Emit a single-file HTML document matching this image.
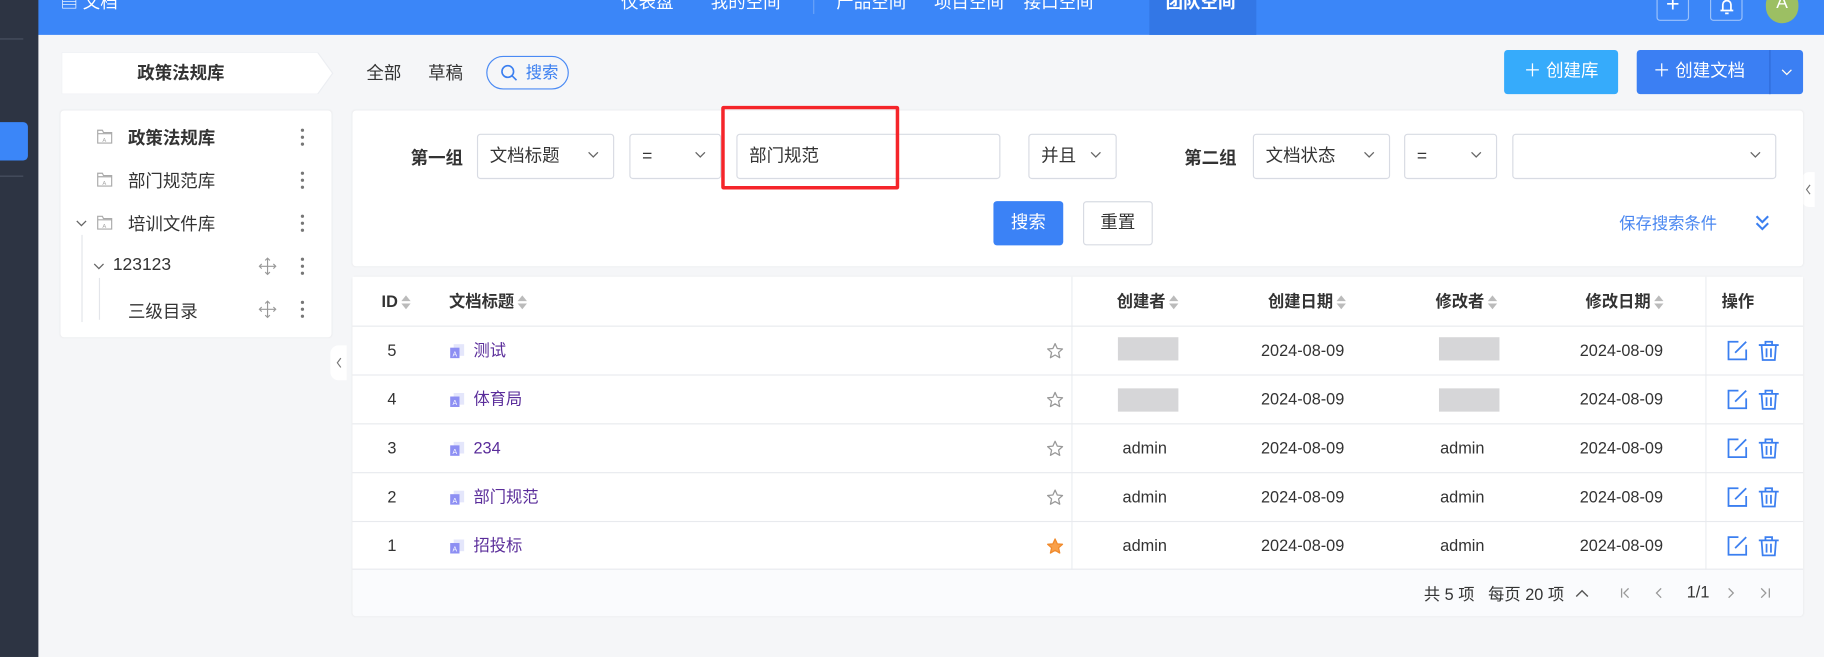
<!DOCTYPE html>
<html><head><meta charset="utf-8"><style>
*{box-sizing:border-box;margin:0;padding:0}
html,body{width:1824px;height:657px;overflow:hidden;background:#f5f6f8}
body{font-family:"Liberation Sans","Noto Sans CJK SC",sans-serif;color:#333;font-size:14px}
#w{position:absolute;left:0;top:0;width:1568px;height:565px;transform:scale(1.16327,1.1628);transform-origin:0 0;background:#f5f6f8}
.a{position:absolute}
.hd{left:0;top:0;width:1568px;height:30px;background:#3b86f8}
.nav{top:-9px;color:#fff;font-size:15px}
.side{left:0;top:0;width:33px;height:565px;background:#2d3443}
.pan{background:#fff;border-radius:3px;box-shadow:0 0 2px rgba(0,0,0,.06)}
.sel{background:#fff;border:1px solid #d8dbe3;border-radius:3px;height:39px;top:115px;font-size:15px;line-height:37px;padding-left:10px}
.sel svg{position:absolute;right:12px;top:14px}
.row{left:0;width:1247px;height:42px;border-top:1px solid #e8eaee}
.cell{position:absolute;top:0;line-height:41px;font-size:14px}
.lk{color:#5a2d9a}
.tree{font-size:15px}
.dots{position:absolute;left:206px}
.sort{display:inline-block;vertical-align:middle;margin-left:3px;width:8px}
.sort:before{content:"";display:block;border:4px solid transparent;border-bottom:5px solid #bbb;border-top:0;margin-bottom:2px}
.sort:after{content:"";display:block;border:4px solid transparent;border-top:5px solid #bbb;border-bottom:0}
.ic{position:absolute}
</style></head><body><div id="w">
<svg width="0" height="0" style="position:absolute"><defs>
<symbol id="chev" viewBox="0 0 10 6"><path d="M1 1l4 4 4-4" fill="none" stroke="#666" stroke-width="1.1"/></symbol>
<symbol id="dot3" viewBox="0 0 4 16"><circle cx="2" cy="2" r="1.4" fill="#777"/><circle cx="2" cy="8" r="1.4" fill="#777"/><circle cx="2" cy="14" r="1.4" fill="#777"/></symbol>
<symbol id="fold" viewBox="0 0 14 13"><path d="M1 1h4l1 2h7v9H1z" fill="none" stroke="#aaa"/><path d="M1 4h12" stroke="#aaa"/><text x="5" y="11" font-size="5" fill="#aaa" font-family="Liberation Sans">A</text></symbol>
<symbol id="move" viewBox="0 0 16 16"><path d="M8 1v14M1 8h14" stroke="#999" stroke-width="1"/><path d="M6 3l2-2 2 2M6 13l2 2 2-2M3 6l-2 2 2 2M13 6l2 2-2 2" fill="none" stroke="#999"/></symbol>
<symbol id="star" viewBox="0 0 16 16"><path d="M8 1.5l1.9 4.2 4.5.4-3.4 3 1 4.5L8 11.3l-4 2.3 1-4.5-3.4-3 4.5-.4z" fill="none" stroke="#999" stroke-width="1.1" stroke-linejoin="round"/></symbol>
<symbol id="starf" viewBox="0 0 16 16"><path d="M8 1.5l1.9 4.2 4.5.4-3.4 3 1 4.5L8 11.3l-4 2.3 1-4.5-3.4-3 4.5-.4z" fill="#f9a04a" stroke="#f08a2c" stroke-width="1.1" stroke-linejoin="round"/></symbol>
<symbol id="doc" viewBox="0 0 14 14"><rect x="4" y="1" width="9" height="10" fill="#e4e6fb"/><rect x="1" y="4" width="8" height="9" fill="#8d8ff3"/><text x="3" y="11.5" font-size="6" fill="#fff" font-family="Liberation Sans">A</text></symbol>
<symbol id="edit" viewBox="0 0 20 20"><path d="M11 2H2v16h16V9" fill="none" stroke="#3b7ff0" stroke-width="1.6"/><path d="M8 12L18 2" stroke="#3b7ff0" stroke-width="1.6"/></symbol>
<symbol id="trash" viewBox="0 0 20 20"><path d="M1 5h18M7 5V2h6v3M3.5 5l1 13.5h11L16.5 5M8 8v8M12 8v8" fill="none" stroke="#3b7ff0" stroke-width="1.6"/></symbol>
</defs></svg>
<div class="a hd"></div>
<div class="a side"></div>
<div class="a" style="left:0;top:33px;width:20px;height:1px;background:#4a5262"></div>
<div class="a" style="left:0;top:105px;width:24px;height:33px;background:#3b86f8;border-radius:0 4px 4px 0"></div>
<div class="a" style="left:0;top:151px;width:20px;height:1px;background:#4a5262"></div>
<div class="a" style="left:52px;top:-9px;color:#fff;font-size:15px">▤ 文档</div>
<div class="a nav" style="left:534px">仪表盘</div>
<div class="a nav" style="left:611px">我的空间</div>
<div class="a" style="left:699px;top:0;width:1px;height:12px;background:#6aa3f8"></div>
<div class="a nav" style="left:719px">产品空间</div>
<div class="a nav" style="left:803px">项目空间</div>
<div class="a nav" style="left:880px">接口空间</div>
<div class="a" style="left:988px;top:0;width:92px;height:30px;background:#3377e6"></div>
<div class="a nav" style="left:1002px;font-weight:bold">团队空间</div>
<div class="a" style="left:1424px;top:-6px;width:28px;height:24px;border:1px solid #9cc2fb;border-radius:3px;color:#fff;text-align:center;line-height:18px;font-size:20px">+</div>
<div class="a" style="left:1470px;top:-6px;width:28px;height:24px;border:1px solid #9cc2fb;border-radius:3px"><svg class="ic" style="left:7px;top:4px" width="13" height="14" viewBox="0 0 13 14"><path d="M3 10V5a3.5 3.5 0 017 0v5M1 10h11M5 12.5h3" fill="none" stroke="#fff" stroke-width="1.5"/></svg></div>
<div class="a" style="left:1518px;top:-10px;width:28px;height:30px;border-radius:14px;background:#9cbf63;color:#fff;text-align:center;line-height:26px;font-size:15px">A</div>

<svg class="a" style="left:53px;top:45px" width="234" height="36"><polygon points="0,0 220,0 233,18 220,36 0,36" fill="#fff" stroke="#eceef2"/></svg>
<div class="a" style="left:53px;top:52px;width:205px;text-align:center;font-weight:bold;font-size:15px">政策法规库</div>
<div class="a" style="left:315px;top:52px;font-size:15px">全部</div>
<div class="a" style="left:368px;top:52px;font-size:15px">草稿</div>
<div class="a" style="left:418px;top:48px;width:71px;height:29px;border:1px solid #4a8af4;border-radius:15px;color:#3b7ff0;font-size:14px;line-height:27px;padding-left:33px">搜索<svg class="ic" style="left:11px;top:6px" width="15" height="15" viewBox="0 0 15 15"><circle cx="6.5" cy="6.5" r="5" fill="none" stroke="#3b7ff0" stroke-width="1.4"/><path d="M10 10l4 4" stroke="#3b7ff0" stroke-width="1.4"/></svg></div>
<div class="a" style="left:1293px;top:43px;width:98px;height:38px;background:#36abfb;border-radius:3px;color:#fff;font-size:15px;line-height:38px;text-align:center">＋ 创建库</div>
<div class="a" style="left:1407px;top:43px;width:143px;height:38px;background:#3b7ff3;border-radius:3px;color:#fff;font-size:15px;line-height:38px;padding-left:14px">＋ 创建文档<span style="position:absolute;left:114px;top:0;width:1px;height:38px;background:#2d6ad6"></span><svg class="ic" style="left:124px;top:16px" width="10" height="6"><use href="#chev" style="stroke:#fff"/><path d="M1 1l4 4 4-4" fill="none" stroke="#fff" stroke-width="1.1"/></svg></div>

<div class="a pan" style="left:52px;top:95px;width:233px;height:195px"></div>
<div class="a tree" style="left:52px;top:95px;width:233px;height:195px">
<svg class="ic" style="left:31px;top:16px" width="14" height="13"><use href="#fold"/></svg><div class="a" style="left:58px;top:13px;font-weight:bold">政策法规库</div><svg class="dots" style="top:15px" width="4" height="16"><use href="#dot3"/></svg>
<svg class="ic" style="left:31px;top:53px" width="14" height="13"><use href="#fold"/></svg><div class="a" style="left:58px;top:50px">部门规范库</div><svg class="dots" style="top:52px" width="4" height="16"><use href="#dot3"/></svg>
<svg class="ic" style="left:13px;top:94px" width="10" height="6"><use href="#chev"/></svg><svg class="ic" style="left:31px;top:90px" width="14" height="13"><use href="#fold"/></svg><div class="a" style="left:58px;top:87px">培训文件库</div><svg class="dots" style="top:89px" width="4" height="16"><use href="#dot3"/></svg>
<div class="a" style="left:18px;top:107px;width:1px;height:75px;background:#e3e5ea"></div>
<svg class="ic" style="left:28px;top:131px" width="10" height="6"><use href="#chev"/></svg><div class="a" style="left:45px;top:124px">123123</div><svg class="ic" style="left:170px;top:126px" width="16" height="16"><use href="#move"/></svg><svg class="dots" style="top:126px" width="4" height="16"><use href="#dot3"/></svg>
<div class="a" style="left:33px;top:144px;width:1px;height:36px;background:#e3e5ea"></div>
<div class="a" style="left:58px;top:162px">三级目录</div><svg class="ic" style="left:170px;top:163px" width="16" height="16"><use href="#move"/></svg><svg class="dots" style="top:163px" width="4" height="16"><use href="#dot3"/></svg>
</div>
<div class="a" style="left:284px;top:297px;width:14px;height:30px;background:#fff;border-radius:7px 0 0 7px"><svg class="ic" style="left:5px;top:10px" width="5" height="10"><path d="M4 1L1 5l3 4" fill="none" stroke="#777"/></svg></div>
<div class="a" style="left:1549px;top:148px;width:11px;height:30px;background:#fff;border-radius:6px 0 0 6px"><svg class="ic" style="left:3px;top:10px" width="5" height="10"><path d="M4 1L1 5l3 4" fill="none" stroke="#777"/></svg></div>

<div class="a pan" style="left:303px;top:95px;width:1247px;height:134px"></div>
<div class="a" style="left:353px;top:125px;font-weight:bold;font-size:15px">第一组</div>
<div class="a sel" style="left:410px;width:118px">文档标题<svg width="10" height="6"><use href="#chev"/></svg></div>
<div class="a sel" style="left:541px;width:79px">=<svg width="10" height="6"><use href="#chev"/></svg></div>
<div class="a sel" style="left:633px;width:227px">部门规范</div>
<div class="a sel" style="left:884px;width:76px">并且<svg width="10" height="6"><use href="#chev"/></svg></div>
<div class="a" style="left:1018px;top:125px;font-weight:bold;font-size:15px">第二组</div>
<div class="a sel" style="left:1077px;width:118px">文档状态<svg width="10" height="6"><use href="#chev"/></svg></div>
<div class="a sel" style="left:1207px;width:80px">=<svg width="10" height="6"><use href="#chev"/></svg></div>
<div class="a sel" style="left:1300px;width:227px"><svg width="10" height="6"><use href="#chev"/></svg></div>
<div class="a" style="left:620px;top:91px;width:153px;height:72px;border:3px solid #f5252a;border-radius:2px"></div>
<div class="a" style="left:854px;top:173px;width:60px;height:38px;background:#3b82f6;border-radius:3px;color:#fff;font-size:15px;line-height:38px;text-align:center">搜索</div>
<div class="a" style="left:931px;top:173px;width:60px;height:38px;background:#fff;border:1px solid #d8dbe3;border-radius:3px;font-size:15px;line-height:36px;text-align:center">重置</div>
<div class="a" style="left:1392px;top:182px;color:#4a87f0;font-size:14px">保存搜索条件</div>
<svg class="a" style="left:1508px;top:184px" width="14" height="16"><path d="M2 2l5 5 5-5M2 8l5 5 5-5" fill="none" stroke="#3b7ff0" stroke-width="1.8"/></svg>

<div class="a pan" style="left:303px;top:238px;width:1247px;height:292px;background:#fafbfd"></div>
<div class="a" style="left:303px;top:238px;width:1247px;height:252px;background:#fff"></div>
<div class="a" style="left:303px;top:238px;width:1247px;height:292px">
<div class="a" style="left:618px;top:0;width:1px;height:252px;background:#ebedf1"></div>
<div class="a" style="left:1163px;top:0;width:1px;height:252px;background:#ebedf1"></div>
<div class="cell" style="left:25px;top:0;font-weight:bold;line-height:42px">ID<span class="sort"></span></div>
<div class="cell" style="left:83px;top:0;font-weight:bold;line-height:42px">文档标题<span class="sort"></span></div>
<div class="cell" style="left:657px;top:0;font-weight:bold;line-height:42px">创建者<span class="sort"></span></div>
<div class="cell" style="left:787px;top:0;font-weight:bold;line-height:42px">创建日期<span class="sort"></span></div>
<div class="cell" style="left:931px;top:0;font-weight:bold;line-height:42px">修改者<span class="sort"></span></div>
<div class="cell" style="left:1060px;top:0;font-weight:bold;line-height:42px">修改日期<span class="sort"></span></div>
<div class="cell" style="left:1177px;top:0;font-weight:bold;line-height:42px">操作</div>
</div>
<div class="a" style="left:303px;top:280px;width:1247px">
<div class="a row" style="top:0"><div class="cell" style="left:30px">5</div><svg class="ic" style="left:83px;top:14px" width="14" height="14"><use href="#doc"/></svg><div class="cell lk" style="left:104px">测试</div><svg class="ic" style="left:596px;top:13px" width="16" height="16"><use href="#star"/></svg><div class="a" style="left:658px;top:9px;width:52px;height:20px;background:#d2d2d4;opacity:.9"></div><div class="cell" style="left:781px">2024-08-09</div><div class="a" style="left:934px;top:9px;width:52px;height:20px;background:#d2d2d4;opacity:.9"></div><div class="cell" style="left:1055px">2024-08-09</div><svg class="ic" style="left:1181px;top:11px" width="19" height="19"><use href="#edit"/></svg><svg class="ic" style="left:1208px;top:11px" width="19" height="19"><use href="#trash"/></svg></div>
<div class="a row" style="top:42px"><div class="cell" style="left:30px">4</div><svg class="ic" style="left:83px;top:14px" width="14" height="14"><use href="#doc"/></svg><div class="cell lk" style="left:104px">体育局</div><svg class="ic" style="left:596px;top:13px" width="16" height="16"><use href="#star"/></svg><div class="a" style="left:658px;top:11px;width:52px;height:20px;background:#d2d2d4;opacity:.9"></div><div class="cell" style="left:781px">2024-08-09</div><div class="a" style="left:934px;top:11px;width:52px;height:20px;background:#d2d2d4;opacity:.9"></div><div class="cell" style="left:1055px">2024-08-09</div><svg class="ic" style="left:1181px;top:11px" width="19" height="19"><use href="#edit"/></svg><svg class="ic" style="left:1208px;top:11px" width="19" height="19"><use href="#trash"/></svg></div>
<div class="a row" style="top:84px"><div class="cell" style="left:30px">3</div><svg class="ic" style="left:83px;top:14px" width="14" height="14"><use href="#doc"/></svg><div class="cell lk" style="left:104px">234</div><svg class="ic" style="left:596px;top:13px" width="16" height="16"><use href="#star"/></svg><div class="cell" style="left:662px">admin</div><div class="cell" style="left:781px">2024-08-09</div><div class="cell" style="left:935px">admin</div><div class="cell" style="left:1055px">2024-08-09</div><svg class="ic" style="left:1181px;top:11px" width="19" height="19"><use href="#edit"/></svg><svg class="ic" style="left:1208px;top:11px" width="19" height="19"><use href="#trash"/></svg></div>
<div class="a row" style="top:126px"><div class="cell" style="left:30px">2</div><svg class="ic" style="left:83px;top:14px" width="14" height="14"><use href="#doc"/></svg><div class="cell lk" style="left:104px">部门规范</div><svg class="ic" style="left:596px;top:13px" width="16" height="16"><use href="#star"/></svg><div class="cell" style="left:662px">admin</div><div class="cell" style="left:781px">2024-08-09</div><div class="cell" style="left:935px">admin</div><div class="cell" style="left:1055px">2024-08-09</div><svg class="ic" style="left:1181px;top:11px" width="19" height="19"><use href="#edit"/></svg><svg class="ic" style="left:1208px;top:11px" width="19" height="19"><use href="#trash"/></svg></div>
<div class="a row" style="top:168px;border-bottom:1px solid #e8eaee"><div class="cell" style="left:30px">1</div><svg class="ic" style="left:83px;top:14px" width="14" height="14"><use href="#doc"/></svg><div class="cell lk" style="left:104px">招投标</div><svg class="ic" style="left:596px;top:13px" width="16" height="16"><use href="#starf"/></svg><div class="cell" style="left:662px">admin</div><div class="cell" style="left:781px">2024-08-09</div><div class="cell" style="left:935px">admin</div><div class="cell" style="left:1055px">2024-08-09</div><svg class="ic" style="left:1181px;top:11px" width="19" height="19"><use href="#edit"/></svg><svg class="ic" style="left:1208px;top:11px" width="19" height="19"><use href="#trash"/></svg></div>
</div>
<div class="a" style="left:1224px;top:501px;font-size:14px">共 5 项 &nbsp;&nbsp;每页 20 项</div>
<svg class="a" style="left:1354px;top:506px" width="12" height="8"><path d="M1 7l5-5 5 5" fill="none" stroke="#555" stroke-width="1.2"/></svg>
<svg class="a" style="left:1390px;top:503px" width="140" height="14"><g fill="none" stroke="#999" stroke-width="1.1"><path d="M4 3v8M10 3l-4 4 4 4"/><path d="M38 3l-4 4 4 4"/><path d="M96 3l4 4-4 4"/><path d="M124 3l4 4-4 4M131 3v8"/></g></svg>
<div class="a" style="left:1450px;top:501px;font-size:14px">1/1</div>
</div></body></html>
